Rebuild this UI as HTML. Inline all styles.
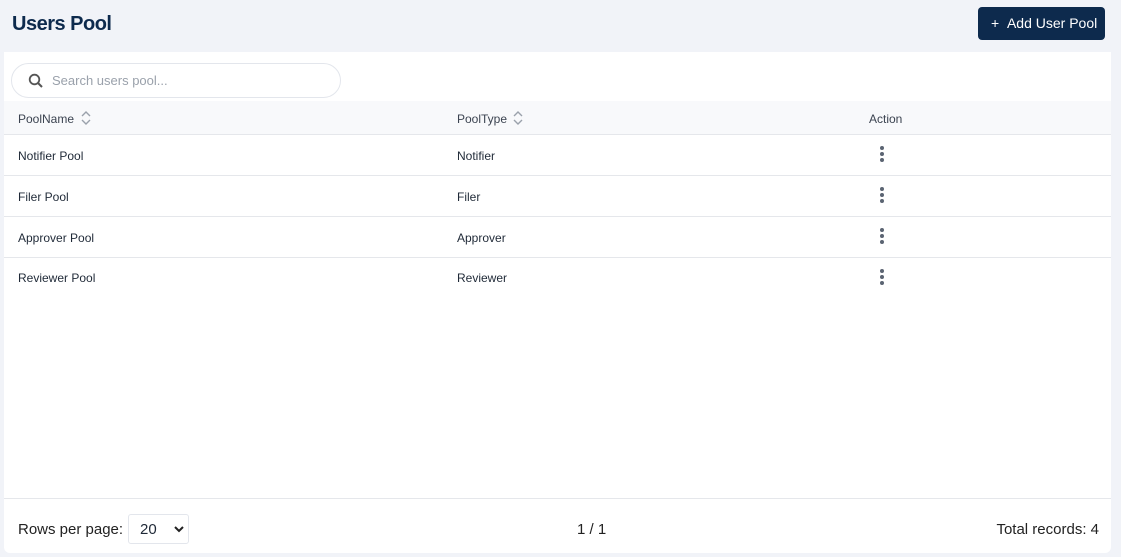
<!DOCTYPE html>
<html><head><style>
*{box-sizing:border-box;margin:0;padding:0}
body{width:1121px;height:557px;background:#f1f3f8;font-family:"Liberation Sans",sans-serif;position:relative;overflow:hidden;color:#1f2937}
h1{position:absolute;left:12px;top:13px;font-size:20px;font-weight:bold;color:#0d2a4d;letter-spacing:-0.5px}
.btn{position:absolute;left:978px;top:7px;width:127px;height:33px;background:#0d2a4d;border-radius:4px;color:#fff;font-size:14px;line-height:32px;padding-left:13px}
.card{position:absolute;left:4px;top:52px;width:1107px;height:501px;background:#fff;border-radius:0 0 6px 6px}
.search{position:absolute;left:7px;top:11px;width:330px;height:35px;border:1px solid #e3e6ec;border-radius:18px;background:#fff}
.search span{position:absolute;left:40px;top:9px;font-size:13px;color:#9aa1ab}
.th{position:absolute;left:0;top:49px;width:1107px;height:34px;background:#f8f9fb;border-bottom:1px solid #e5e7eb}
.cell{position:absolute;font-size:12px;color:#1f2937}
.h{color:#3b4350;font-size:12px}
.row{position:absolute;left:0;width:1107px;height:41px;border-bottom:1px solid #e5e7eb}
.dots{position:absolute;left:876px;width:4px}
.dots i{display:block;width:4px;height:4px;border-radius:2px;background:#5b6472;margin-bottom:2px}
.foot{position:absolute;left:0;top:446px;width:1107px;border-top:1px solid #e5e7eb;height:55px}
.f{position:absolute;font-size:15px;color:#222;top:22px}
.sel{position:absolute;left:124px;top:15px;width:61px;height:30px;border:1px solid #e3e6ec;border-radius:3px}
</style></head><body>
<h1>Users Pool</h1>
<div class="btn">+&nbsp;&nbsp;Add User Pool</div>
<div class="card">
 <div class="search"><svg style="position:absolute;left:16px;top:9px" width="16" height="16" viewBox="0 0 16 16"><circle cx="6.5" cy="6.5" r="4.8" fill="none" stroke="#555" stroke-width="1.8"/><line x1="10" y1="10" x2="14" y2="14" stroke="#555" stroke-width="2"/></svg><span>Search users pool...</span></div>
 <div class="th">
  <div class="cell h" style="left:14px;top:11px">PoolName</div>
  <svg style="position:absolute;left:76px;top:8px" width="12" height="18" viewBox="0 0 12 18"><path d="M2 7l4-4 4 4M2 11l4 4 4-4" fill="none" stroke="#9aa1ab" stroke-width="1.4"/></svg>
  <div class="cell h" style="left:453px;top:11px">PoolType</div>
  <svg style="position:absolute;left:508px;top:8px" width="12" height="18" viewBox="0 0 12 18"><path d="M2 7l4-4 4 4M2 11l4 4 4-4" fill="none" stroke="#9aa1ab" stroke-width="1.4"/></svg>
  <div class="cell h" style="left:865px;top:11px">Action</div>
 </div>
 <div class="row" style="top:83px"><div class="cell" style="left:14px;top:14px">Notifier Pool</div><div class="cell" style="left:453px;top:14px">Notifier</div><div class="dots" style="top:11px"><i></i><i></i><i></i></div></div>
 <div class="row" style="top:124px"><div class="cell" style="left:14px;top:14px">Filer Pool</div><div class="cell" style="left:453px;top:14px">Filer</div><div class="dots" style="top:11px"><i></i><i></i><i></i></div></div>
 <div class="row" style="top:165px"><div class="cell" style="left:14px;top:14px">Approver Pool</div><div class="cell" style="left:453px;top:14px">Approver</div><div class="dots" style="top:11px"><i></i><i></i><i></i></div></div>
 <div class="row" style="top:206px;border-bottom:none"><div class="cell" style="left:14px;top:13px">Reviewer Pool</div><div class="cell" style="left:453px;top:13px">Reviewer</div><div class="dots" style="top:11px"><i></i><i></i><i></i></div></div>
 <div class="foot">
  <div class="f" style="left:14px">Rows per page:</div>
  <div class="sel"><span style="position:absolute;left:11px;top:6px;font-size:15px">20</span><svg style="position:absolute;left:45px;top:10px" width="10" height="8" viewBox="0 0 10 8"><path d="M1 2l4 4 4-4" fill="none" stroke="#222" stroke-width="2"/></svg></div>
  <div class="f" style="left:573px">1 / 1</div>
  <div class="f" style="right:12px">Total records: 4</div>
 </div>
</div>
</body></html>
